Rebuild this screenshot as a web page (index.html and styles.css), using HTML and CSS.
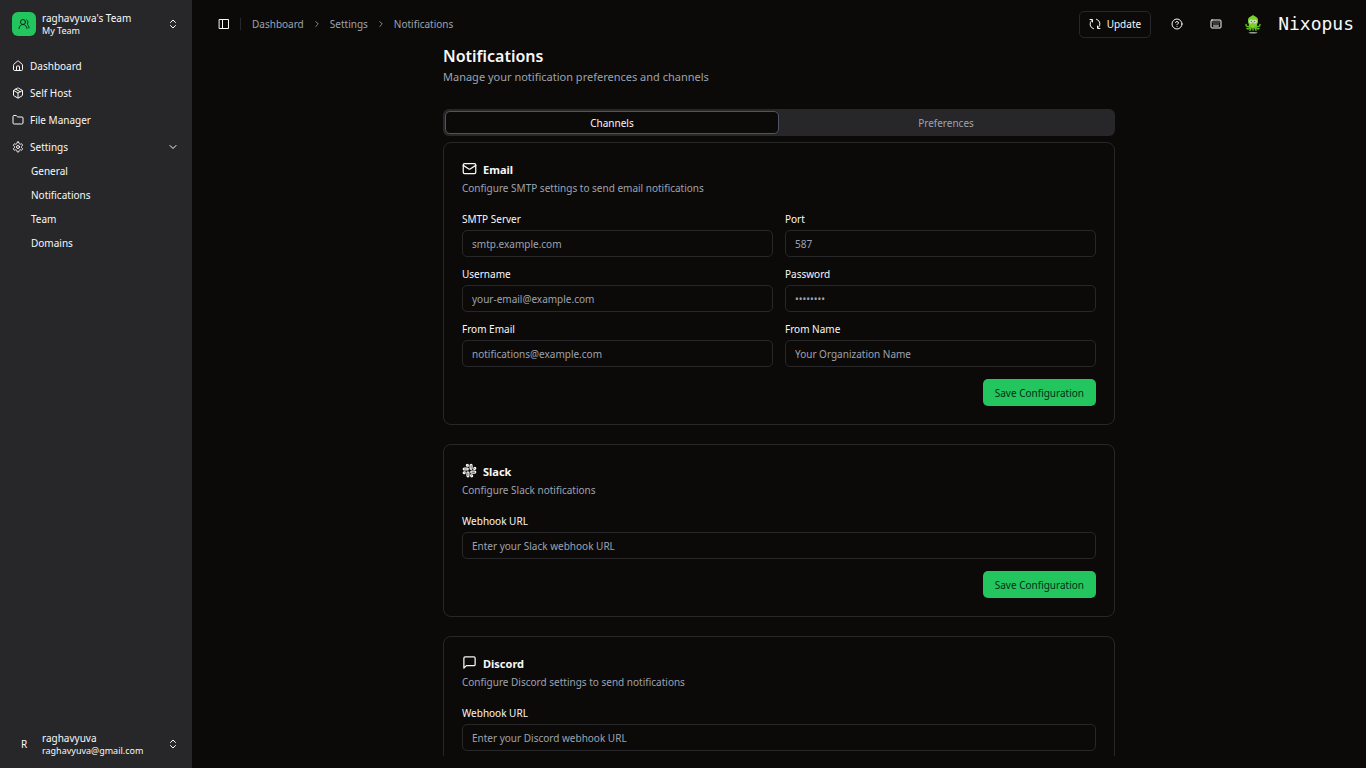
FILE: index.html
```html
<!DOCTYPE html>
<html lang="en">
<head>
<meta charset="utf-8">
<meta name="viewport" content="width=device-width, initial-scale=1">
<title>Nixopus - Notifications</title>
<link rel="stylesheet" href="styles.css">
</head>
<body>
<div class="app">
  <aside class="sidebar">
    <button class="account" type="button">
      <span class="avatar avatar-team"><svg class="icon" viewBox="0 0 24 24"><path d="M18 21a8 8 0 0 0-16 0"/><circle cx="10" cy="8" r="5"/><path d="M22 20c0-3.370-2-6.500-4-8a5 5 0 0 0-.45-8.300"/></svg></span>
      <span class="account-text"><span class="account-name">raghavyuva's Team</span><span class="account-sub">My Team</span></span>
      <svg class="icon" viewBox="0 0 24 24"><path d="m7 15 5 5 5-5"/><path d="m7 9 5-5 5 5"/></svg>
    </button>
    <nav class="nav" aria-label="Main">
      <a class="nav-item" href="#"><svg class="icon" viewBox="0 0 24 24"><path d="M15 21v-8a1 1 0 0 0-1-1h-4a1 1 0 0 0-1 1v8"/><path d="M3 10a2 2 0 0 1 .709-1.528l7-5.999a2 2 0 0 1 2.582 0l7 5.999A2 2 0 0 1 21 10v9a2 2 0 0 1-2 2H5a2 2 0 0 1-2-2z"/></svg><span>Dashboard</span></a>
      <a class="nav-item" href="#"><svg class="icon" viewBox="0 0 24 24"><path d="M11 21.730a2 2 0 0 0 2 0l7-4A2 2 0 0 0 21 16V8a2 2 0 0 0-1-1.730l-7-4a2 2 0 0 0-2 0l-7 4A2 2 0 0 0 3 8v8a2 2 0 0 0 1 1.730z"/><path d="M12 22V12"/><path d="m3.300 7 8.700 5 8.700-5"/><path d="m7.500 4.270 9 5.150"/></svg><span>Self Host</span></a>
      <a class="nav-item" href="#"><svg class="icon" viewBox="0 0 24 24"><path d="M20 20a2 2 0 0 0 2-2V8a2 2 0 0 0-2-2h-7.900a2 2 0 0 1-1.690-.9L9.600 3.900A2 2 0 0 0 7.930 3H4a2 2 0 0 0-2 2v13a2 2 0 0 0 2 2Z"/></svg><span>File Manager</span></a>
      <a class="nav-item" href="#"><svg class="icon" viewBox="0 0 24 24"><path d="M12.220 2h-.44a2 2 0 0 0-2 2v.18a2 2 0 0 1-1 1.730l-.43.25a2 2 0 0 1-2 0l-.15-.08a2 2 0 0 0-2.730.73l-.22.38a2 2 0 0 0 .73 2.730l.15.1a2 2 0 0 1 1 1.720v.51a2 2 0 0 1-1 1.740l-.15.09a2 2 0 0 0-.73 2.730l.22.38a2 2 0 0 0 2.730.73l.15-.08a2 2 0 0 1 2 0l.43.25a2 2 0 0 1 1 1.730V20a2 2 0 0 0 2 2h.44a2 2 0 0 0 2-2v-.18a2 2 0 0 1 1-1.730l.43-.25a2 2 0 0 1 2 0l.15.08a2 2 0 0 0 2.730-.73l.22-.39a2 2 0 0 0-.73-2.730l-.15-.08a2 2 0 0 1-1-1.740v-.5a2 2 0 0 1 1-1.740l.15-.09a2 2 0 0 0 .73-2.730l-.22-.38a2 2 0 0 0-2.730-.73l-.15.08a2 2 0 0 1-2 0l-.43-.25a2 2 0 0 1-1-1.730V4a2 2 0 0 0-2-2z"/><circle cx="12" cy="12" r="3"/></svg><span>Settings</span><svg class="icon chevron" viewBox="0 0 24 24"><path d="m6 9 6 6 6-6"/></svg></a>
      <div class="subnav">
        <a href="#">General</a>
        <a href="#">Notifications</a>
        <a href="#">Team</a>
        <a href="#">Domains</a>
      </div>
    </nav>
    <button class="account" type="button">
      <span class="avatar">R</span>
      <span class="account-text"><span class="account-name">raghavyuva</span><span class="account-sub">raghavyuva@gmail.com</span></span>
      <svg class="icon" viewBox="0 0 24 24"><path d="m7 15 5 5 5-5"/><path d="m7 9 5-5 5 5"/></svg>
    </button>
  </aside>

  <div class="page">
    <header class="topbar">
      <button class="icon-button" type="button" aria-label="Toggle sidebar"><svg class="icon icon-crisp" viewBox="0 0 12 12"><rect x="1.500" y="1.500" width="9" height="9"/><path d="M4.500 1.500v9"/></svg></button>
      <nav class="breadcrumb" aria-label="Breadcrumb">
        <a href="#">Dashboard</a>
        <svg class="icon icon-small" viewBox="0 0 24 24"><path d="m9 18 6-6-6-6"/></svg>
        <a href="#">Settings</a>
        <svg class="icon icon-small" viewBox="0 0 24 24"><path d="m9 18 6-6-6-6"/></svg>
        <a href="#">Notifications</a>
      </nav>
      <div class="tools">
        <button class="update" type="button"><svg class="icon" viewBox="0 0 24 24"><path d="M9 21.500a9.700 9.700 0 0 1-3-17"/><path d="M2 3h5v5"/><path d="M15 2.500a9.700 9.700 0 0 1 3 17"/><path d="M22 21h-5v-5"/></svg>Update</button>
        <button class="icon-button" type="button" aria-label="Help"><svg class="icon" viewBox="0 0 24 24"><circle cx="12" cy="12" r="10"/><path d="M9.090 9a3 3 0 0 1 5.830 1c0 2-3 3-3 3"/><path d="M12 17h.01"/></svg></button>
        <button class="icon-button" type="button" aria-label="Keyboard shortcuts"><svg class="icon" viewBox="0 0 24 24"><path d="M10 8h.01M12 12h.01M14 8h.01M16 12h.01M18 8h.01M6 8h.01M7 16h10M8 12h.01"/><rect width="20" height="16" x="2" y="4" rx="2"/></svg></button>
        <a class="brand" href="#">
          <svg class="mascot" viewBox="0 0 18 20" aria-hidden="true">
            <ellipse cx="9" cy="18.800" rx="4.500" ry=".8" fill="#9eaaa6"/>
            <g fill="none" stroke="#62bd20" stroke-width="1.500" stroke-linecap="round"><path d="M6 11c-1 2.500-4 2-4-.5M12 11c1 2.500 4 2 4-.5M6 12.500c0 2-2 2.800-3 2M12 12.500c0 2 2 2.800 3 2M7.500 13l-1.500 3.200M10.500 13l1.500 3.200M9 13v3"/></g>
            <path d="M9 .8c.3.800 1 1 2 1.400 2.500 1 3.300 2.800 3 5.300-.5 3.500-2.500 6.500-5 6.500s-4.500-3-5-6.500C3.700 5 4.500 3.200 7 2.200c1-.4 1.700-.6 2-1.400z" fill="#78d32a"/>
            <circle cx="7.100" cy="7.500" r="2" fill="#d5e4cb"/><circle cx="10.900" cy="7.500" r="2" fill="#d5e4cb"/>
            <circle cx="7.400" cy="7.500" r=".8" fill="#587058"/><circle cx="10.600" cy="7.500" r=".8" fill="#587058"/>
            <path d="M8 8.500h2l-1 2z" fill="#d2a436"/>
          </svg>
          <span>Nixopus</span>
        </a>
      </div>
    </header>

    <main class="scroll">
      <div class="content">
        <h1>Notifications</h1>
        <p class="lead">Manage your notification preferences and channels</p>
        <div class="tabs" role="tablist">
          <button class="tab tab-active" type="button" role="tab" aria-selected="true">Channels</button>
          <button class="tab" type="button" role="tab" aria-selected="false">Preferences</button>
        </div>
        <div class="cards">
          <section class="card">
            <h2><svg class="icon icon-large" viewBox="0 0 24 24"><rect width="20" height="16" x="2" y="4" rx="2"/><path d="m22 7-8.970 5.700a1.940 1.940 0 0 1-2.060 0L2 7"/></svg>Email</h2>
            <p class="description">Configure SMTP settings to send email notifications</p>
            <form>
              <div class="fields">
                <div class="field"><label for="server">SMTP Server</label><input id="server" type="text" placeholder="smtp.example.com"></div>
                <div class="field"><label for="port">Port</label><input id="port" type="text" placeholder="587"></div>
                <div class="field"><label for="username">Username</label><input id="username" type="text" placeholder="your-email@example.com"></div>
                <div class="field"><label for="password">Password</label><input id="password" type="password" placeholder="••••••••"></div>
                <div class="field"><label for="from-email">From Email</label><input id="from-email" type="email" placeholder="notifications@example.com"></div>
                <div class="field"><label for="from-name">From Name</label><input id="from-name" type="text" placeholder="Your Organization Name"></div>
              </div>
              <button class="save" type="button">Save Configuration</button>
            </form>
          </section>
          <section class="card">
            <h2><svg class="icon icon-large" viewBox="0 0 24 24"><rect width="3" height="8" x="13" y="2" rx="1.500"/><path d="M19 8.500V10h1.500A1.500 1.500 0 1 0 19 8.500"/><rect width="3" height="8" x="8" y="14" rx="1.500"/><path d="M5 15.500V14H3.500A1.500 1.500 0 1 0 5 15.500"/><rect width="8" height="3" x="14" y="13" rx="1.500"/><path d="M15.500 19H14v1.500a1.500 1.500 0 1 0 1.500-1.500"/><rect width="8" height="3" x="2" y="8" rx="1.500"/><path d="M8.500 5H10V3.500A1.500 1.500 0 1 0 8.500 5"/></svg>Slack</h2>
            <p class="description">Configure Slack notifications</p>
            <form>
              <div class="field"><label for="slack-url">Webhook URL</label><input id="slack-url" type="text" placeholder="Enter your Slack webhook URL"></div>
              <button class="save" type="button">Save Configuration</button>
            </form>
          </section>
          <section class="card">
            <h2><svg class="icon icon-large" viewBox="0 0 24 24"><path d="M21 15a2 2 0 0 1-2 2H7l-4 4V5a2 2 0 0 1 2-2h14a2 2 0 0 1 2 2z"/></svg>Discord</h2>
            <p class="description">Configure Discord settings to send notifications</p>
            <form>
              <div class="field"><label for="discord-url">Webhook URL</label><input id="discord-url" type="text" placeholder="Enter your Discord webhook URL"></div>
            </form>
          </section>
        </div>
      </div>
    </main>
  </div>
</div>
</body>
</html>
```
FILE: styles.css
```css
:root {
  --bg: #0c0a09;
  --panel: #27272a;
  --text: #f8f8f8;
  --muted: #9ca3af;
  --green: #22c55e;
}

* { box-sizing: border-box; }

body {
  margin: 0;
  background: var(--bg);
  color: var(--text);
  font: 10px/16px "Noto Sans", sans-serif;
}

a { color: inherit; text-decoration: none; }

button {
  margin: 0;
  padding: 0;
  border: 0;
  background: none;
  color: inherit;
  font: inherit;
  cursor: pointer;
}

h1, h2, p { margin: 0; }

.icon {
  flex: none;
  width: 12px;
  height: 12px;
  fill: none;
  stroke: currentColor;
  stroke-width: 2;
  stroke-linecap: round;
  stroke-linejoin: round;
}
.icon-small { width: 10px; height: 10px; }
.icon-large { width: 15px; height: 15px; }
.icon-crisp { stroke-width: 1; }

.app { display: flex; height: 100vh; }

/* Sidebar */
.sidebar {
  flex: none;
  display: flex;
  flex-direction: column;
  width: 192px;
  background: var(--panel);
}
.account {
  display: flex;
  align-items: center;
  gap: 6px;
  height: 48px;
  padding: 0 13px 0 12px;
  text-align: left;
}
.avatar {
  display: grid;
  place-items: center;
  width: 24px;
  height: 24px;
  border-radius: 6px;
}
.avatar-team { background: var(--green); color: #052e16; }
.account-text { flex: 1; display: flex; flex-direction: column; }
.account-name { line-height: 14px; }
.account-sub { font-size: 9px; line-height: 12px; }

.nav { flex: 1; padding: 6px 12px; }
.nav-item {
  display: flex;
  align-items: center;
  gap: 6px;
  height: 24px;
  margin-bottom: 3px;
}
.chevron { margin-left: auto; margin-right: 1px; }
.subnav { padding-left: 19px; }
.subnav a { display: block; line-height: 24px; }
.nav-item + .subnav { margin-top: -3px; }

/* Top bar */
.page { flex: 1; display: flex; flex-direction: column; min-width: 0; padding-bottom: 12px; }
.topbar {
  flex: none;
  display: flex;
  align-items: center;
  height: 44px;
  padding: 4px 12px 0 26px;
}
.icon-button { display: grid; place-items: center; width: 12px; height: 24px; }
.breadcrumb {
  display: flex;
  align-items: center;
  gap: 8px;
  margin-left: 10px;
  color: var(--muted);
}
.breadcrumb::before {
  content: "";
  width: 1px;
  height: 12px;
  margin-right: 3px;
  background: var(--panel);
}
.tools { display: flex; align-items: center; gap: 27px; margin-left: auto; }
.update {
  display: flex;
  align-items: center;
  gap: 6px;
  height: 27px;
  margin-right: -7px;
  padding: 0 9px;
  border: 1px solid var(--panel);
  border-radius: 5px;
}
.brand {
  display: flex;
  align-items: center;
  gap: 16px;
  margin-left: -5px;
  font: 18px/24px "DejaVu Sans Mono", monospace;
}
.mascot { width: 18px; height: 20px; }

/* Content */
.scroll { flex: 1; min-height: 0; overflow: hidden; }
.content { max-width: 672px; margin: 0 auto; }
h1 { font-size: 16px; line-height: 24px; font-weight: 600; }
.lead { padding-top: 1px; color: var(--muted); font-size: 11px; }
.tabs {
  display: grid;
  grid-template-columns: 1fr 1fr;
  margin-top: 24px;
  padding: 2px;
  border-radius: 6px;
  background: var(--panel);
}
.tab { height: 23px; border: 1px solid transparent; border-radius: 5px; color: var(--muted); }
.tab-active { background: var(--bg); border-color: #4b5563; color: var(--text); }

.cards { display: grid; gap: 19px; margin-top: 6px; }
.card { padding: 18px; border: 1px solid var(--panel); border-radius: 8px; }
h2 { display: flex; align-items: flex-start; gap: 6px; font-size: 11px; line-height: 18px; font-weight: 700; }
.description { padding-top: 1px; color: var(--muted); }

form { display: flex; flex-direction: column; gap: 12px; margin-top: 17px; }
.fields { display: grid; grid-template-columns: 1fr 1fr; gap: 11px 12px; }
.field { display: flex; flex-direction: column; gap: 5px; }
label { line-height: 12px; }
input {
  width: 100%;
  height: 27px;
  padding: 0 9px;
  border: 1px solid var(--panel);
  border-radius: 5px;
  background: transparent;
  color: var(--text);
  font: inherit;
}
input::placeholder { color: var(--muted); opacity: 1; }
.save {
  align-self: flex-end;
  height: 27px;
  padding: 0 12px;
  border-radius: 5px;
  background: var(--green);
  color: #052e16;
}
```
